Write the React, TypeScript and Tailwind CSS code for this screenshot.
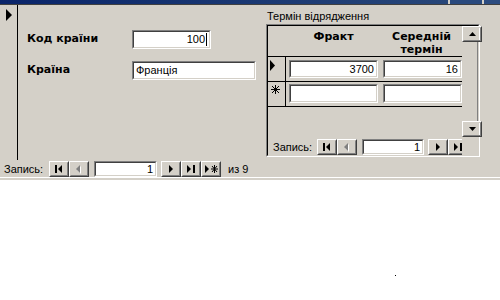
import type { ReactNode } from "react";

const sans = "font-['Liberation_Sans',Arial,sans-serif]";
const bold = "font-['DejaVu_Sans',Verdana,sans-serif] font-bold";

// sunken win2000 text box
const Field = ({ className, children, right }: { className: string; children?: ReactNode; right?: boolean }) => (
  <div className={`border border-t-[#808080] border-l-[#808080] border-b-white border-r-white ${className}`}>
    <div
      className={`h-full border border-t-[#404040] border-l-[#404040] border-b-[#d4d0c8] border-r-[#d4d0c8] bg-white flex items-center text-[11px] leading-[13px] text-black ${
        right ? "justify-end pr-[2px]" : "pl-[2px]"
      }`}
    >
      {children}
    </div>
  </div>
);

const Btn = ({ children }: { children: ReactNode }) => (
  <div className="w-[20px] h-[16px] border border-t-white border-l-white border-b-[#404040] border-r-[#404040]">
    <div className="h-full border border-t-[#d4d0c8] border-l-[#d4d0c8] border-b-[#808080] border-r-[#808080] flex items-center justify-center">
      {children}
    </div>
  </div>
);

const First = () => (
  <svg width="8" height="8" viewBox="0 0 8 8">
    <rect x="0" y="0" width="2" height="8" fill="#000" />
    <polygon points="7,0 7,8 3,4" fill="#000" />
  </svg>
);
const Prev = () => (
  <svg width="6" height="9" viewBox="0 0 6 9">
    <polygon points="5,1 5,9 1,5" fill="#fff" />
    <polygon points="4,0 4,8 0,4" fill="#808080" />
  </svg>
);
const Next = () => (
  <svg width="5" height="8" viewBox="0 0 5 8">
    <polygon points="0,0 4,4 0,8" fill="#000" />
  </svg>
);
const Last = () => (
  <svg width="8" height="8" viewBox="0 0 8 8">
    <polygon points="0,0 4,4 0,8" fill="#000" />
    <rect x="6" y="0" width="2" height="8" fill="#000" />
  </svg>
);
const NewRec = () => (
  <svg width="13" height="8" viewBox="0 0 13 8">
    <polygon points="0,0 4,4 0,8" fill="#000" />
    <g stroke="#000" strokeWidth="1">
      <line x1="9.5" y1="0" x2="9.5" y2="8" />
      <line x1="6" y1="4" x2="13" y2="4" />
      <line x1="7" y1="1" x2="12" y2="7" />
      <line x1="12" y1="1" x2="7" y2="7" />
    </g>
  </svg>
);

const Star = () => (
  <svg width="9" height="9" viewBox="0 0 9 9">
    <g stroke="#000" strokeWidth="1">
      <line x1="4.5" y1="0" x2="4.5" y2="9" />
      <line x1="0" y1="4.5" x2="9" y2="4.5" />
      <line x1="1" y1="1" x2="8" y2="8" />
      <line x1="8" y1="1" x2="1" y2="8" />
    </g>
  </svg>
);

const Arrow = ({ up }: { up?: boolean }) => (
  <svg width="7" height="4" viewBox="0 0 7 4">
    <polygon points={up ? "3.5,0 7,4 0,4" : "0,0 7,0 3.5,4"} fill="#000" />
  </svg>
);

const NavBar = ({ boxWidth, label, last }: { boxWidth: string; label: string; last?: boolean }) => (
  <div className="flex items-center h-[16px]">
    <span className={`${label} text-[11px] leading-[13px] text-black`}>Запись:</span>
    <Btn><First /></Btn>
    <Btn><Prev /></Btn>
    <Field className={`${boxWidth} h-[16px] ml-[5px] mr-[4px]`} right>1</Field>
    <Btn><Next /></Btn>
    <Btn><Last /></Btn>
    {last && (
      <>
        <Btn><NewRec /></Btn>
        <span className="ml-[7px] text-[11px] leading-[13px] text-black">из 9</span>
      </>
    )}
  </div>
);

export default function App() {
  return (
    <div className={`w-[500px] h-[300px] bg-white relative overflow-hidden ${sans}`}>
      <div className="h-[180px] bg-[#d4d0c8] flex flex-col">
        <div className="h-[4px] flex">
          <div className="w-[448px] bg-gradient-to-r from-[#0a246a] to-[#274679]" />
          <div className="w-[2px] bg-[#d4d0c8]" />
          <div className="w-[32px] bg-[#2a4a7e]" />
          <div className="w-[2px] bg-[#d4d0c8]" />
          <div className="flex-1 bg-[#2c4c80]" />
        </div>
        <div className="h-px bg-[#404040]" />

        <div className="flex h-[155px]">
          {/* record selector */}
          <div className="w-[18px] border-r border-black pt-[4px] pl-[6px]">
            <svg width="7" height="12" viewBox="0 0 7 12">
              <polygon points="0,0 6,6 0,12" fill="#000" />
            </svg>
          </div>

          <div className="flex-1 flex">
            {/* main fields */}
            <div className="w-[248px] pl-[9px] pt-[25px] flex flex-col gap-[12px]">
              <div className="flex items-center h-[19px]">
                <span className={`w-[105px] text-[11px] text-black ${bold}`}>Код країни</span>
                <Field className="w-[79px] h-[19px]" right>
                  100<span className="inline-block w-px h-[13px] bg-black ml-px" />
                </Field>
              </div>
              <div className="flex items-center h-[19px]">
                <span className={`w-[105px] text-[11px] text-black ${bold}`}>Країна</span>
                <Field className="w-[124px] h-[19px]">Франція</Field>
              </div>
            </div>

            {/* subform */}
            <div className="pt-[5px] flex flex-col">
              <div className="h-[14px] pl-px text-[11px] leading-[13px] text-black">Термін відрядження</div>
              <div className="w-[214px] h-[133px] border border-t-[#808080] border-l-[#808080] border-b-white border-r-white">
                <div className="h-full border border-t-black border-l-black border-b-[#d4d0c8] border-r-[#d4d0c8] flex flex-col">
                  <div className="flex h-[111px]">
                    <div className="w-[194px] flex flex-col text-[11px] leading-[13px] text-black">
                      <div className={`h-[31px] border-b border-black flex pt-[4px] ${bold}`}>
                        <div className="w-[18px]" />
                        <div className="w-[95px] text-center">Фракт</div>
                        <div className="flex-1 text-center">Середній<br />термін</div>
                      </div>
                      <div className="h-[25px] border-b border-black flex">
                        <div className="w-[18px] border-r border-black pl-[2px] pt-[3px]">
                          <svg width="6" height="11" viewBox="0 0 6 11">
                            <polygon points="0,0 5,5.5 0,11" fill="#000" />
                          </svg>
                        </div>
                        <Field className="w-[89px] h-[18px] ml-[3px] mt-[3px]" right>3700</Field>
                        <Field className="w-[79px] h-[18px] ml-[5px] mt-[3px]" right>16</Field>
                      </div>
                      <div className="h-[25px] border-b border-black flex">
                        <div className="w-[18px] border-r border-black pl-[3px] pt-[3px]">
                          <Star />
                        </div>
                        <Field className="w-[89px] h-[19px] ml-[3px] mt-[2px]" />
                        <Field className="w-[79px] h-[19px] ml-[5px] mt-[2px]" />
                      </div>
                    </div>
                    {/* scrollbar */}
                    <div className="w-[16px] flex flex-col">
                      <Btn>
                        <Arrow up />
                      </Btn>
                      <div className="flex-1 border-r border-[#808080] bg-[#d4d0c8]" />
                      <Btn>
                        <Arrow />
                      </Btn>
                    </div>
                  </div>
                  <div className="w-[194px] overflow-hidden pt-[2px]">
                    <div className="w-[260px]">
                      <NavBar boxWidth="w-[62px]" label="w-[49px] pl-[5px]" />
                    </div>
                  </div>
                </div>
              </div>
            </div>
          </div>
        </div>

        <div className="h-[17px] flex items-end">
          <NavBar boxWidth="w-[63px]" label="w-[49px] pl-[4px]" last />
        </div>
        <div className="h-px bg-white" />
      </div>
      <div className="absolute left-[395px] top-[275px] w-px h-px bg-black" />
    </div>
  );
}
